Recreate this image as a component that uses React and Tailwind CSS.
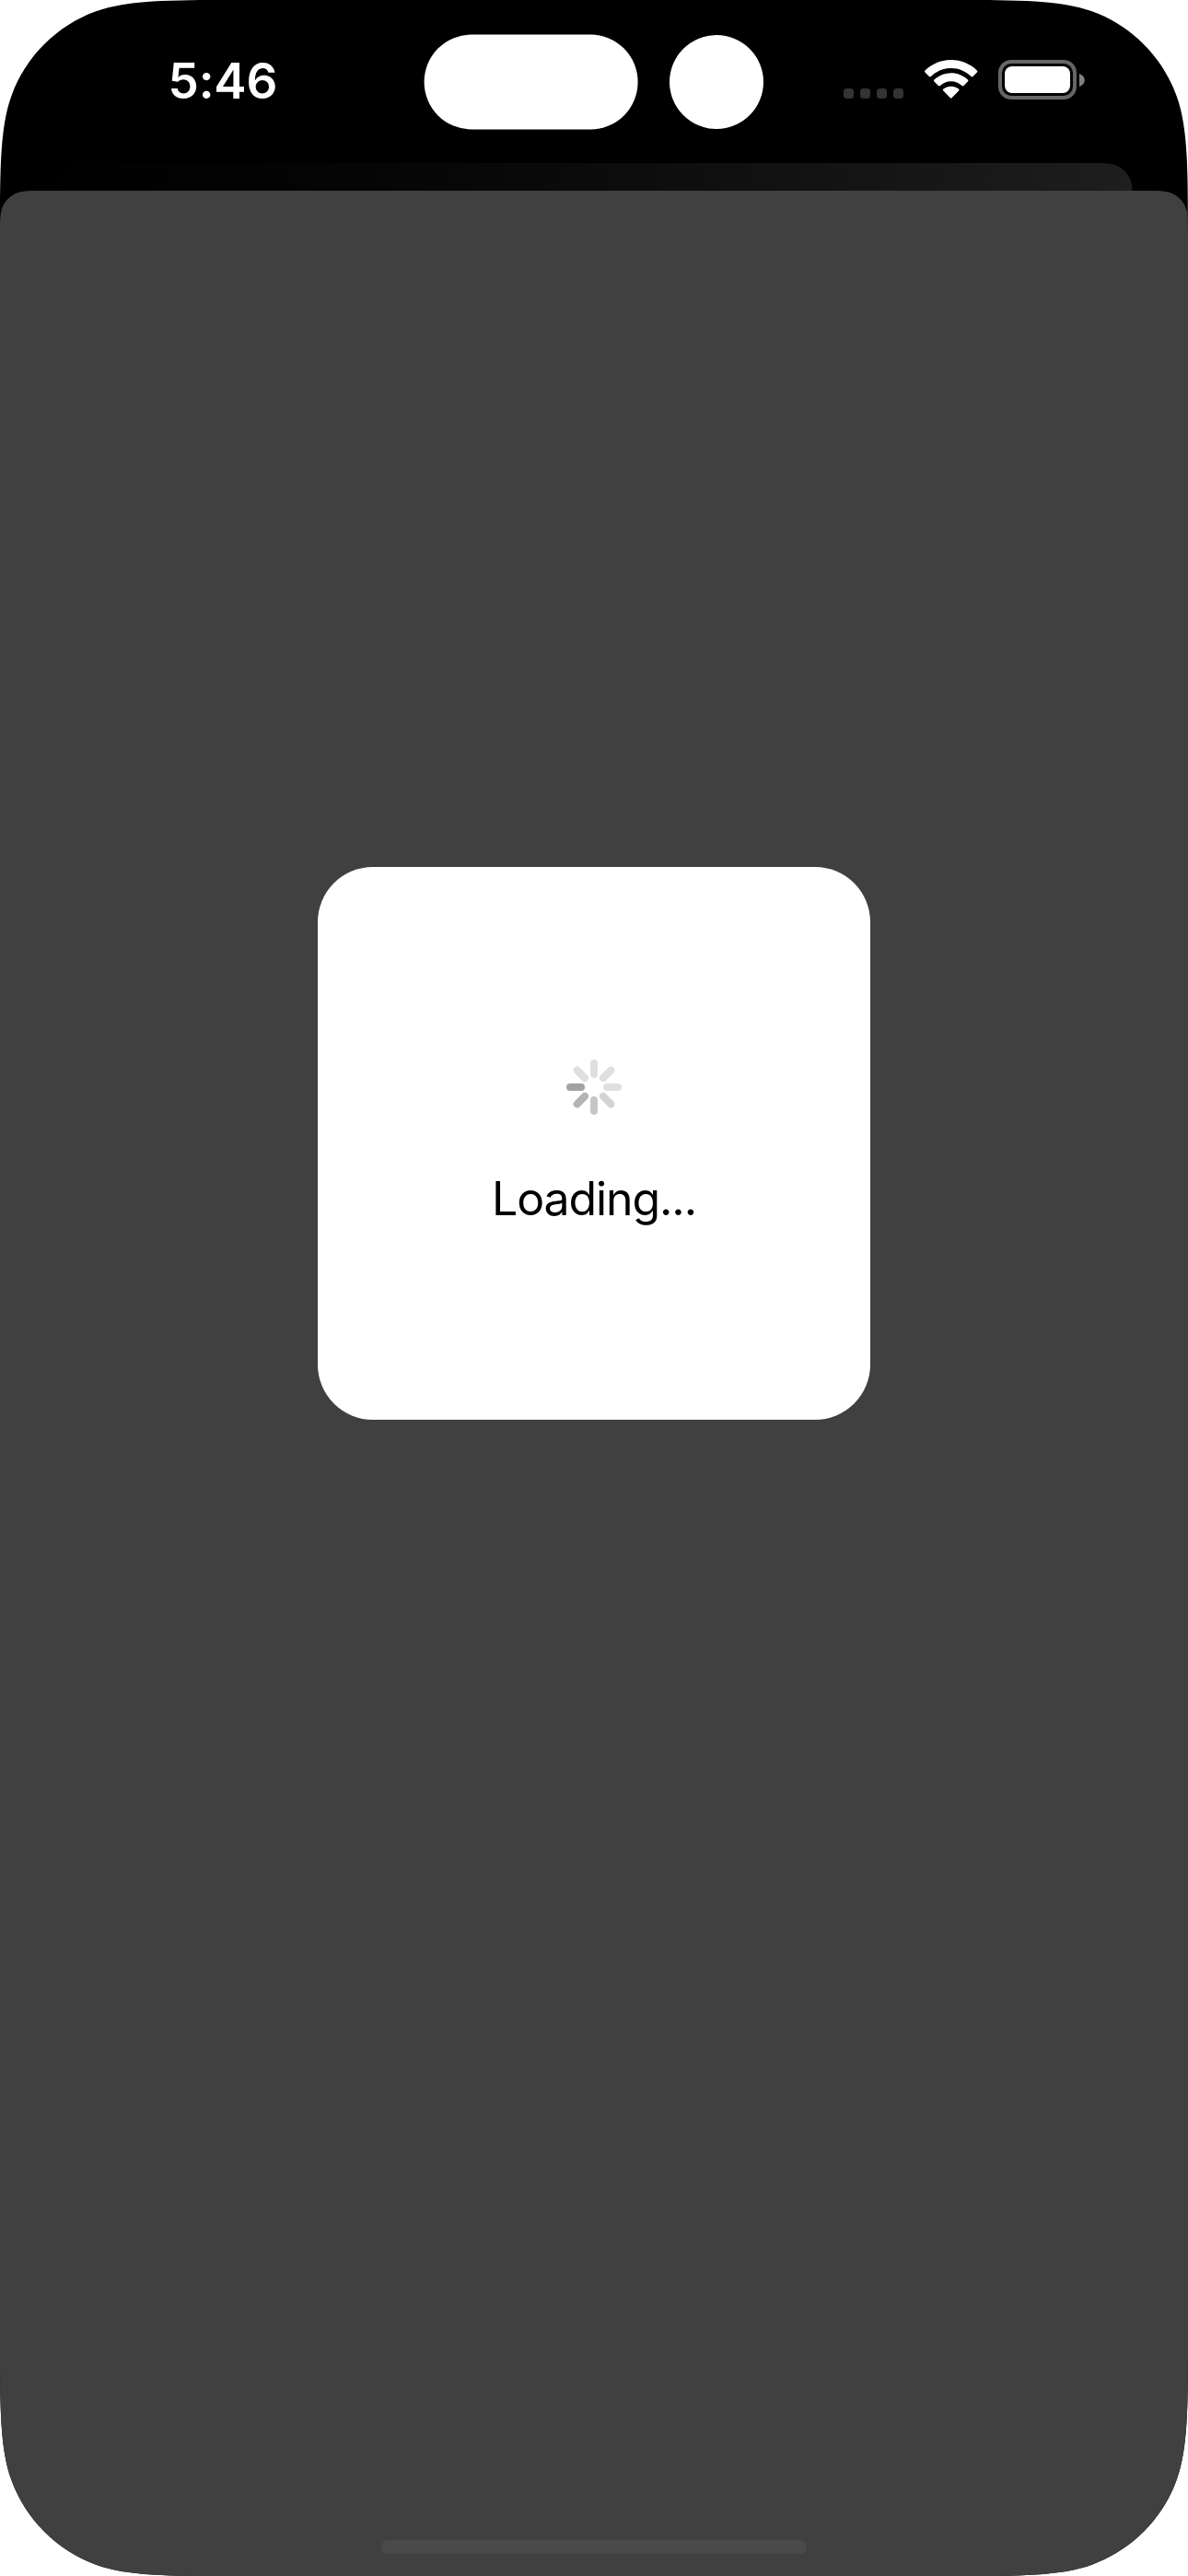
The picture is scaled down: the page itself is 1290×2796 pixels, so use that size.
import React from "react";

// Continuous-curvature rounded rectangle. Radii: top pair and bottom pair.
function smoothRect(w, h, top, bottom) {
  const edge = 1.528665;
  const a = 1.12;
  const b = 0.8373;
  const c = 0.631494;
  const d = 0.074911;
  const e = 0.372824;
  const f = 0.16906;
  const corner = (r, map) => {
    const p = (x, y) => map(x * r, y * r).join(" ");
    return [
      `L ${p(edge, 0)}`,
      `C ${p(a, 0)} ${p(b, 0)} ${p(c, d)}`,
      `C ${p(e, f)} ${p(f, e)} ${p(d, c)}`,
      `C ${p(0, b)} ${p(0, a)} ${p(0, edge)}`,
    ].join(" ");
  };
  const square = (x, y) => `L ${x} ${y}`;
  return [
    `M ${w / 2} 0`,
    top ? corner(top, (x, y) => [x, y]) : square(0, 0),
    bottom ? corner(bottom, (x, y) => [y, h - x]) : square(0, h),
    bottom ? corner(bottom, (x, y) => [w - x, h - y]) : square(w, h),
    top ? corner(top, (x, y) => [w - y, x]) : square(w, 0),
    "Z",
  ].join(" ");
}

const clip = (...args) => ({ clipPath: `path("${smoothRect(...args)}")` });

const BLADES = [
  "#dfdfe0",
  "#dfdfe0",
  "#dfdfe0",
  "#d4d4d6",
  "#c6c6c8",
  "#b4b4b7",
  "#a2a2a4",
  "#dfdfe0",
];

function Spinner() {
  return (
    <svg className="size-[60px]" viewBox="-30 -30 60 60" aria-hidden="true">
      {BLADES.map((color, i) => (
        <rect
          key={i}
          x="-4"
          y="-30"
          width="8"
          height="20"
          rx="4"
          fill={color}
          transform={`rotate(${i * 45})`}
        />
      ))}
    </svg>
  );
}

function Wifi() {
  return (
    <svg className="h-[42px] w-[58px]" viewBox="0 0 58 42" fill="#fff" aria-hidden="true">
      <path d="M28.7 0C39.6 0 49.4 4.3 56.9 11.4Q57.9 12.5 56.9 13.5L52.5 18Q51.5 18.8 50.5 18C44.8 12.5 37.1 9.1 28.7 9.1S12.6 12.5 6.9 18Q5.9 18.8 4.9 18L.5 13.5Q-.5 12.5 .5 11.4C8 4.3 17.8 0 28.7 0Z" />
      <path d="M28.7 14.3C35.6 14.3 42 16.9 46.9 21.5Q47.9 22.5 46.9 23.5L42.5 27.9Q41.4 28.8 40.4 27.9C37.3 25.1 33.2 23.3 28.7 23.3S20.1 25.1 17 27.9Q16 28.8 14.9 27.9L10.5 23.5Q9.5 22.5 10.5 21.5C15.4 16.9 21.8 14.3 28.7 14.3Z" />
      <path d="M28.7 28.7C31.8 28.7 34.7 29.8 37 31.6Q38.1 32.6 37.1 33.6L29.5 41.3Q28.7 42 27.9 41.3L20.3 33.6Q19.3 32.6 20.4 31.6C22.7 29.8 25.6 28.7 28.7 28.7Z" />
    </svg>
  );
}

function Battery() {
  return (
    <div className="flex h-[43px] items-center gap-[3px]">
      <div className="flex h-[43px] w-[85px] items-center justify-center rounded-[14px] border-[4px] border-[#666666]">
        <div className="h-[29px] w-[71px] rounded-[8px] bg-white" />
      </div>
      <svg className="h-[14px] w-[6px]" viewBox="0 0 6 14" aria-hidden="true">
        <path d="M0 0C3.5 1.4 5.8 3.9 5.8 7S3.5 12.6 0 14Z" fill="#808080" />
      </svg>
    </div>
  );
}

function StatusBar() {
  return (
    <header className="flex h-[177px] items-start">
      <time className="ml-[182.5px] mt-[56px] w-[277.5px] whitespace-nowrap text-[53px] font-semibold leading-[64px] tracking-[-0.2px] text-white">
        5:46
      </time>
      <div className="mt-[37px] h-[103px] w-[232px] shrink-0 translate-x-[0.6px] translate-y-[0.5px] rounded-full bg-white" />
      <div className="ml-[35px] mt-[38px] size-[102px] shrink-0 rounded-full bg-white" />
      <div className="ml-[87px] mt-[65px] flex h-[43px] items-start">
        <div className="mt-[31px] flex gap-[7px]">
          {[0, 1, 2, 3].map((i) => (
            <div key={i} className="size-[11px] rounded-[3.5px] bg-[#333333]" />
          ))}
        </div>
        <div className="ml-[23px] flex gap-[22px]">
          <Wifi />
          <Battery />
        </div>
      </div>
    </header>
  );
}

export default function App() {
  return (
    <div className="h-[2796px] w-[1290px] overflow-hidden bg-white font-['Inter',sans-serif]">
      <div
        className="flex h-[2796px] w-[1290px] flex-col bg-black"
        style={clip(1290, 2796, 165, 165)}
      >
        <StatusBar />
        <div
          className="mx-[60px] -mb-[70px] h-[100px] shrink-0 bg-linear-to-r from-[#010101] to-[#1e1e1e]"
          style={clip(1170, 100, 30, 0)}
        />
        <main
          className="flex h-[2589px] shrink-0 flex-col items-center bg-[#404040]"
          style={clip(1290, 2589, 30, 0)}
        >
          <section className="mt-[734px] flex size-[600px] flex-col items-center rounded-[60px] bg-white pt-[209px]">
            <Spinner />
            <p className="mt-[59px] whitespace-nowrap text-[50px] leading-[64px] tracking-[-1.1px] text-black">
              Loading...
            </p>
          </section>
          <div className="mb-[24px] mt-auto h-[15px] w-[462px] rounded-full bg-[#4a4a4a]" />
        </main>
      </div>
    </div>
  );
}
